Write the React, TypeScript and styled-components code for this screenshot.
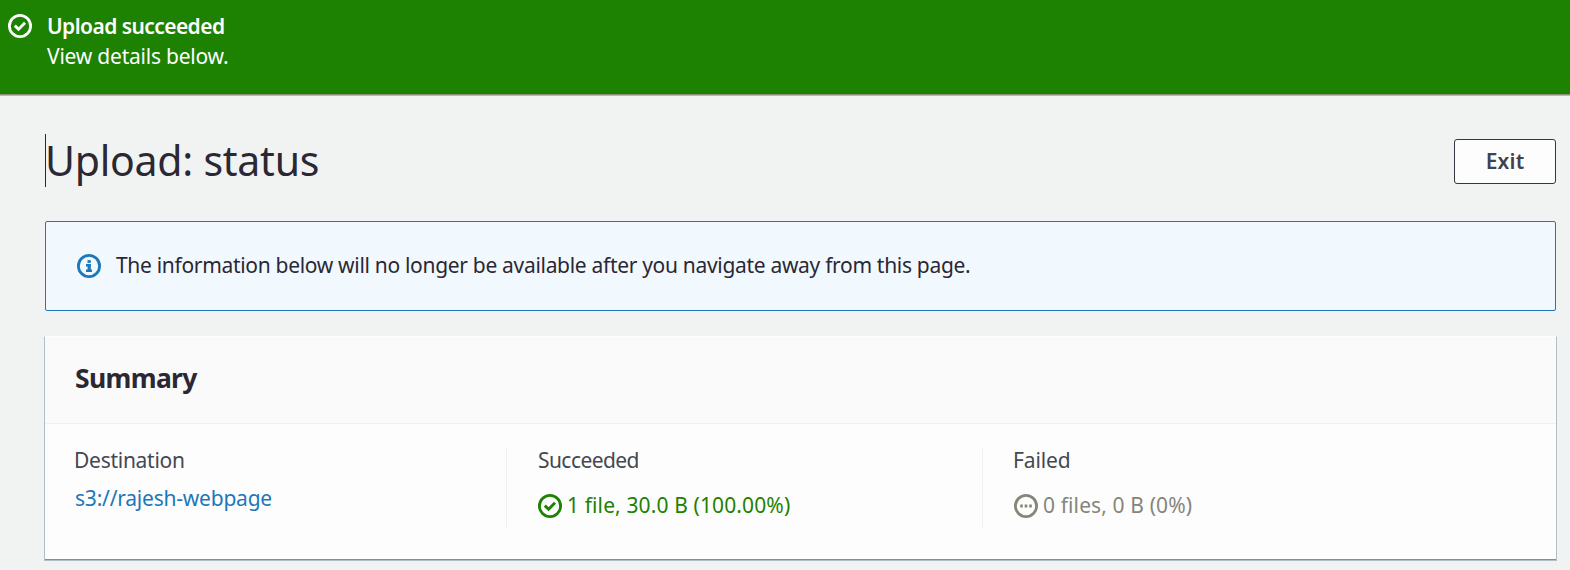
import React from "react";
import styled, { createGlobalStyle } from "styled-components";

const GlobalStyle = createGlobalStyle`
  * { box-sizing: border-box; }
  body {
    margin: 0;
    background: #f1f3f3;
    color: #2b2733;
    font-family: "Noto Sans", "Open Sans", sans-serif;
    font-size: 21px;
    line-height: 30px;
  }
`;

const Page = styled.div`
  height: 570px;
  overflow: hidden;
`;

const Flash = styled.header`
  display: flex;
  gap: 15px;
  height: 96px;
  padding: 11px 8px 0;
  background: #1d8102;
  color: #fcfdfc;
  border-bottom: 1px solid #b5bab8;
  box-shadow: inset 0 -1px 0 #8d8c77;
`;

const FlashTitle = styled.div`
  font-weight: 600;
  letter-spacing: -0.57px;
`;

const FlashText = styled.div`
  letter-spacing: -0.22px;
`;

const Content = styled.main`
  padding: 38px 13px 0 44px;
`;

const TitleBar = styled.div`
  display: flex;
  justify-content: space-between;
  align-items: flex-start;
  height: 87px;
  padding: 0 1px;
`;

const Title = styled.h1`
  margin: 0;
  height: 53px;
  border-left: 1px solid #2b2733;
  font-size: 41px;
  font-weight: 400;
  line-height: 53px;
  letter-spacing: -0.25px;
  text-indent: -1px;
`;

const ExitButton = styled.button`
  width: 102px;
  height: 45px;
  margin-top: 5px;
  padding: 0 0 1px;
  border: 1px solid #39343f;
  border-radius: 3px;
  background: #fdfdfe;
  color: #3d4450;
  font: 600 21px/30px "Noto Sans", "Open Sans", sans-serif;
  letter-spacing: 0.2px;
`;

const InfoAlert = styled.section`
  display: flex;
  align-items: center;
  gap: 15px;
  height: 90px;
  margin: 0 1px 25px;
  padding-left: 31px;
  border: 1px solid #1f78b9;
  border-radius: 2px;
  background: #f1f9ff;
  letter-spacing: -0.31px;
`;

const AlertText = styled.span`
  padding-bottom: 2px;
`;

const Card = styled.section`
  height: 225px;
  background: #fdfdfe;
  border: 1px solid #b0bfc3;
  border-top-color: #fdfdfe;
  box-shadow: inset 0 -1px 0 #8b8d7d;
`;

const CardHeader = styled.div`
  height: 87px;
  padding: 23px 30px 0;
  border-bottom: 1px solid #f0f1f1;
  background: #fafafa;
`;

const CardTitle = styled.h2`
  margin: 0;
  font-size: 26.5px;
  font-weight: 700;
  line-height: 36px;
  letter-spacing: -0.65px;
`;

const Columns = styled.div`
  display: grid;
  grid-template-columns: 461px 476px 1fr;
  padding-top: 23px;
`;

const Column = styled.div<{ $first?: boolean }>`
  height: 81px;
  padding-left: ${(p) => (p.$first ? 30 : 31)}px;
  border-left: ${(p) => (p.$first ? "none" : "1px solid #eff0f1")};
`;

const Label = styled.div<{ $tracking: number; $nudge?: number }>`
  margin-top: -2px;
  margin-left: ${(p) => p.$nudge ?? 0}px;
  color: #45484f;
  letter-spacing: ${(p) => p.$tracking}px;
`;

const BucketLink = styled.a`
  display: block;
  margin-top: 8px;
  color: #1c78b8;
  letter-spacing: -0.22px;
`;

const Status = styled.div<{ $color: string }>`
  display: flex;
  align-items: center;
  gap: 5px;
  margin-top: 16px;
  color: ${(p) => p.$color};
  letter-spacing: 0.12px;
`;

const StatusText = styled.span`
  margin: -1px 0 1px;
`;

const IconSvg = styled.svg<{ $color?: string; $top?: number }>`
  flex: none;
  margin-top: ${(p) => p.$top ?? 0}px;
  color: ${(p) => p.$color ?? "inherit"};
`;

type IconProps = { kind: "check" | "info" | "pending"; color?: string; top?: number };

const Icon = ({ kind, color, top }: IconProps) => (
  <IconSvg $color={color} $top={top} width="24" height="24" viewBox="0 0 24 24" fill="none" stroke="currentColor">
    <circle cx="12" cy="12" r="10.6" strokeWidth="2.8" />
    {kind === "check" && <path d="M6.8 11.6 10.6 15.2 17 8.8" strokeWidth="2.9" />}
    {kind === "info" && (
      <>
        <path d="M10.5 7.5h3.3" strokeWidth="2.8" />
        <path d="M9 11.3h4.8M9 16.7h6" strokeWidth="2.5" />
        <path d="M12.2 10.4v7" strokeWidth="3.2" />
      </>
    )}
    {kind === "pending" && <path d="M6.2 12h2.6M10.7 12h2.6M15.2 12h2.6" strokeWidth="2.8" />}
  </IconSvg>
);

export default function App() {
  return (
    <Page>
      <GlobalStyle />
      <Flash>
        <Icon kind="check" top={3} />
        <div>
          <FlashTitle>Upload succeeded</FlashTitle>
          <FlashText>View details below.</FlashText>
        </div>
      </Flash>
      <Content>
        <TitleBar>
          <Title>Upload: status</Title>
          <ExitButton>Exit</ExitButton>
        </TitleBar>
        <InfoAlert>
          <Icon kind="info" color="#1c78b8" />
          <AlertText>The information below will no longer be available after you navigate away from this page.</AlertText>
        </InfoAlert>
        <Card>
          <CardHeader>
            <CardTitle>Summary</CardTitle>
          </CardHeader>
          <Columns>
            <Column $first>
              <Label $tracking={-0.27} $nudge={-1}>Destination</Label>
              <BucketLink>s3://rajesh-webpage</BucketLink>
            </Column>
            <Column>
              <Label $tracking={-0.57}>Succeeded</Label>
              <Status $color="#1d8102">
                <Icon kind="check" />
                <StatusText>1 file, 30.0 B (100.00%)</StatusText>
              </Status>
            </Column>
            <Column>
              <Label $tracking={-0.1} $nudge={-1}>Failed</Label>
              <Status $color="#85857a">
                <Icon kind="pending" />
                <StatusText>0 files, 0 B (0%)</StatusText>
              </Status>
            </Column>
          </Columns>
        </Card>
      </Content>
    </Page>
  );
}
